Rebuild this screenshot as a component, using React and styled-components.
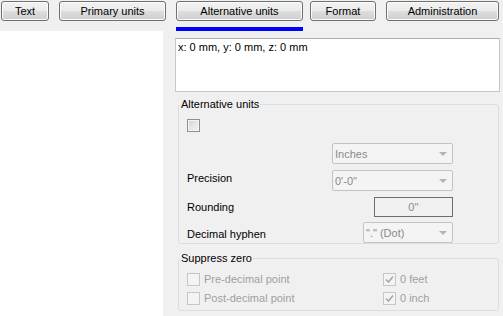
import React from 'react';
import styled, { createGlobalStyle } from 'styled-components';

const GlobalStyle = createGlobalStyle`
  html, body {
    margin: 0;
    padding: 0;
    background: #f0f0f0;
  }
  body {
    font-family: "Liberation Sans", Arial, sans-serif;
    font-size: 11px;
    color: #000;
  }
`;

const Page = styled.div`
  width: 503px;
  height: 316px;
  display: flex;
  flex-direction: column;
  background: #f0f0f0;
  overflow: hidden;
`;

const TabBar = styled.div`
  display: flex;
  height: 31px;
  padding: 1px 0 0 1px;
  box-sizing: border-box;
`;

const TabSlot = styled.div`
  display: flex;
  flex-direction: column;
  width: ${(p) => p.$w}px;
  margin-left: ${(p) => p.$ml || 0}px;
`;

const TabButton = styled.button`
  height: 20px;
  padding: 0;
  border: 1px solid #707070;
  border-radius: 3px;
  background: linear-gradient(#f2f2f2 0%, #ebebeb 48%, #dddddd 52%, #cfcfcf 100%);
  box-shadow: inset 0 0 0 1px #fbfbfb;
  font-family: "Liberation Sans", Arial, sans-serif;
  font-size: 11px;
  color: #000;
  line-height: 17px;
  text-align: center;
`;

const Indicator = styled.div`
  height: 4px;
  margin-top: 6px;
  background: ${(p) => (p.$active ? '#0000ff' : 'transparent')};
`;

const Body = styled.div`
  display: flex;
  flex: 1;
`;

const SidePanel = styled.div`
  width: 163px;
  background: #fff;
`;

const Main = styled.div`
  flex: 1;
  padding: 7px 0 0 12px;
  display: flex;
  flex-direction: column;
`;

const Coords = styled.div`
  width: 325px;
  height: 54px;
  box-sizing: border-box;
  background: #fff;
  border: 1px solid #c4c8cc;
  border-top-color: #abadb3;
  padding: 2px 0 0 2px;
  line-height: 13px;
`;

const Group = styled.div`
  position: relative;
  width: 321px;
  margin: ${(p) => p.$mt}px 0 0 3px;
  box-sizing: border-box;
  border: 1px solid #d5dfe5;
  border-radius: 3px;
  padding: ${(p) => p.$pad};
`;

const GroupTitle = styled.span`
  position: absolute;
  top: -7px;
  left: 1px;
  padding: 0 1px;
  line-height: 13px;
  background: #f0f0f0;
  color: #000;
`;

const Box = styled.span`
  display: inline-flex;
  align-items: center;
  justify-content: center;
  width: 13px;
  height: 13px;
  box-sizing: border-box;
  flex-shrink: 0;
  border: 1px solid ${(p) => (p.$enabled ? '#8e8f8f' : '#c6c6c6')};
  background: ${(p) =>
    p.$enabled
      ? 'linear-gradient(135deg, #d2d2d2 0%, #e8e8e8 60%, #f8f8f8 100%)'
      : '#f4f4f4'};
  box-shadow: ${(p) => (p.$enabled ? 'inset 0 0 0 1px #f4f4f4' : 'none')};
`;

const CheckRow = styled.div`
  display: flex;
  align-items: center;
  height: 13px;
`;

const CheckLabel = styled.span`
  margin-left: 4px;
  line-height: 13px;
  color: #a0a0a0;
`;

const FieldRow = styled.div`
  display: flex;
  align-items: center;
  justify-content: space-between;
  height: ${(p) => p.$h || 21}px;
  margin-top: ${(p) => p.$mt}px;
  padding-right: 45px;
`;

const FieldLabel = styled.span`
  padding-top: ${(p) => (p.$shift > 0 ? p.$shift : 0)}px;
  padding-bottom: ${(p) => (p.$shift < 0 ? -p.$shift : 0)}px;
  color: #000;
`;

const Select = styled.div`
  display: flex;
  align-items: center;
  justify-content: space-between;
  width: ${(p) => p.$w}px;
  height: 21px;
  box-sizing: border-box;
  border: 1px solid #c3c3c3;
  border-radius: 2px;
  background: #f4f4f4;
  padding: 0 5px 0 2px;
  color: #8a8a8a;
  margin-left: auto;
`;

const Arrow = styled.span`
  width: 0;
  height: 0;
  border-left: 4px solid transparent;
  border-right: 4px solid transparent;
  border-top: 4px solid #b4b4b4;
`;

const ReadOnlyValue = styled.div`
  width: 79px;
  height: 20px;
  box-sizing: border-box;
  border: 1px solid #6d6d6d;
  background: #f0f0f0;
  color: #8a8a8a;
  text-align: center;
  line-height: 18px;
  margin-left: auto;
`;

const SuppressGrid = styled.div`
  display: grid;
  grid-template-columns: 196px 1fr;
  row-gap: 6px;
`;

const Tick = () => (
  <svg width="9" height="9" viewBox="0 0 9 9">
    <path d="M1 4.5 L3.5 7 L8 1.5" fill="none" stroke="#a8a8a8" strokeWidth="1.6" />
  </svg>
);

const Check = ({ label, checked, enabled }) => (
  <CheckRow>
    <Box $enabled={enabled}>{checked ? <Tick /> : null}</Box>
    {label ? <CheckLabel>{label}</CheckLabel> : null}
  </CheckRow>
);

const tabs = [
  { label: 'Text', w: 48, ml: 0 },
  { label: 'Primary units', w: 107, ml: 10 },
  { label: 'Alternative units', w: 127, ml: 10, active: true },
  { label: 'Format', w: 66, ml: 7 },
  { label: 'Administration', w: 113, ml: 10 },
];

export default function App() {
  return (
    <Page>
      <GlobalStyle />
      <TabBar>
        {tabs.map((t) => (
          <TabSlot key={t.label} $w={t.w} $ml={t.ml}>
            <TabButton>{t.label}</TabButton>
            <Indicator $active={t.active} />
          </TabSlot>
        ))}
      </TabBar>

      <Body>
        <SidePanel />
        <Main>
          <Coords>x: 0 mm, y: 0 mm, z: 0 mm</Coords>

          <Group $mt={12} $pad="14px 0 0 8px">
            <GroupTitle>Alternative units</GroupTitle>
            <Check enabled />
            <FieldRow $mt={11}>
              <Select $w={121}>
                <span>Inches</span>
                <Arrow />
              </Select>
            </FieldRow>
            <FieldRow $mt={6}>
              <FieldLabel $shift={-5}>Precision</FieldLabel>
              <Select $w={121}>
                <span>0'-0''</span>
                <Arrow />
              </Select>
            </FieldRow>
            <FieldRow $mt={6} $h={20}>
              <FieldLabel $shift={-1}>Rounding</FieldLabel>
              <ReadOnlyValue>0''</ReadOnlyValue>
            </FieldRow>
            <FieldRow $mt={5}>
              <FieldLabel $shift={3}>Decimal hyphen</FieldLabel>
              <Select $w={90}>
                <span>"." (Dot)</span>
                <Arrow />
              </Select>
            </FieldRow>
          </Group>

          <Group $mt={14} $pad="14px 0 5px 8px">
            <GroupTitle>Suppress zero</GroupTitle>
            <SuppressGrid>
              <Check label="Pre-decimal point" />
              <Check label="0 feet" checked />
              <Check label="Post-decimal point" />
              <Check label="0 inch" checked />
            </SuppressGrid>
          </Group>
        </Main>
      </Body>
    </Page>
  );
}
